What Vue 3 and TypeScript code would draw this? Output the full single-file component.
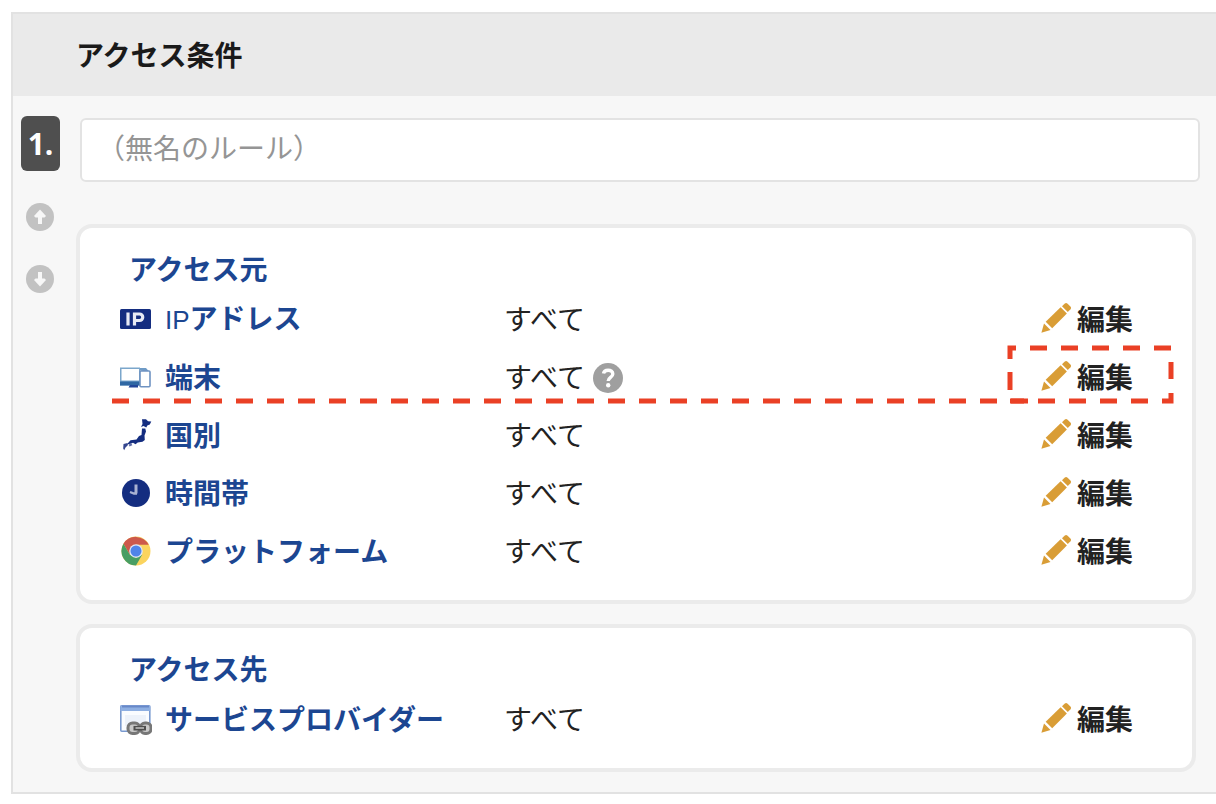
<script setup lang="ts">
import { ref } from 'vue'

interface Condition {
  icon: 'ip' | 'device' | 'japan' | 'clock' | 'chrome' | 'provider'
  latin?: string
  label: string
  value: string
  help?: boolean
  marked?: boolean
}

interface Section {
  id: string
  title: string
  rows: Condition[]
}

const ruleName = ref('')

const sections: Section[] = [
  {
    id: 'source',
    title: 'アクセス元',
    rows: [
      { icon: 'ip', latin: 'IP', label: 'アドレス', value: 'すべて' },
      { icon: 'device', label: '端末', value: 'すべて', help: true, marked: true },
      { icon: 'japan', label: '国別', value: 'すべて' },
      { icon: 'clock', label: '時間帯', value: 'すべて' },
      { icon: 'chrome', label: 'プラットフォーム', value: 'すべて' },
    ],
  },
  {
    id: 'target',
    title: 'アクセス先',
    rows: [{ icon: 'provider', label: 'サービスプロバイダー', value: 'すべて' }],
  },
]
</script>

<template>
  <main class="panel">
    <header class="panel-head">
      <h1>アクセス条件</h1>
    </header>
    <div class="panel-body">
      <div class="side">
        <span class="badge">1.</span>
        <button type="button" class="move" aria-label="上へ移動">
          <svg viewBox="0 0 28 28" width="28" height="28">
            <circle cx="14" cy="14" r="14" fill="#c2c2c2" />
            <path d="M14 21V10" fill="none" stroke="#f7f7f7" stroke-width="4" />
            <path d="M14 6.500l6 6.500-1.500 1.500h-9L8 13z" fill="#f7f7f7" />
          </svg>
        </button>
        <button type="button" class="move" aria-label="下へ移動">
          <svg viewBox="0 0 28 28" width="28" height="28">
            <circle cx="14" cy="14" r="14" fill="#c2c2c2" />
            <path d="M14 7V18" fill="none" stroke="#f7f7f7" stroke-width="4" />
            <path d="M14 21.500l6-6.500-1.500-1.500h-9L8 15z" fill="#f7f7f7" />
          </svg>
        </button>
      </div>
      <div class="content">
        <input v-model="ruleName" class="name" type="text" aria-label="ルール名" placeholder="（無名のルール）" />
        <section v-for="section in sections" :key="section.id" class="card" :aria-labelledby="section.id">
          <h2 :id="section.id">{{ section.title }}</h2>
          <table>
            <tbody>
              <tr v-for="row in section.rows" :key="row.label">
                <th scope="row">
                  <div class="label">
                    <svg v-if="row.icon === 'ip'" class="icon" viewBox="0 0 32 32">
                      <rect x="0" y="6" width="31" height="20" rx="1.500" fill="#142d80" />
                      <path d="M8 9.500v13M14.500 22.500v-13M13 11h6.500a2.800 2.800 0 0 1 0 6.500h-4" fill="none" stroke="#e8ebf5" stroke-width="3.200" />
                    </svg>
                    <svg v-else-if="row.icon === 'device'" class="icon" viewBox="0 0 32 32">
                      <path d="M0 6.500h20v18H0z" fill="#7ba6cb" />
                      <path d="M1.500 8h17.500v11.500H1.500z" fill="#fff" />
                      <path d="M0 20.500h20v4H0z" fill="#2f67a3" />
                      <path d="M10 24h8v2.500H8.500z" fill="#23479a" />
                      <path d="M20 9.500V7h6l3.500 4z" fill="#6f9bc6" />
                      <rect x="20" y="10" width="10" height="15.800" rx="1" fill="#fff" stroke="#6f93c2" stroke-width="1.600" />
                    </svg>
                    <svg v-else-if="row.icon === 'japan'" class="icon" viewBox="0 0 32 32">
                      <path d="M22 .3h4l2 2 3.300.2-1.500 3-2.500 1-1 2-2.800-1.500-2.500 1 1.500-3z" fill="#142d80" />
                      <path d="M22 9.500h3.300l.7 3-1.500 4 .3 4.500-2.300 1.800-4.800.7-2.200 1.800-2.500-1.500-2.500 1-3.500.5 3.500-4 6-.8 2.500-3.500 2.500-1z" fill="#142d80" />
                      <path d="M3.500 25l4-1 .5 2-2.500 2.500-1.300 2.800-1-1.800z" fill="#35468f" />
                      <path d="M8.500 25.500l3-1 .8 1.800-2.800 1.200z" fill="#6470a8" />
                    </svg>
                    <svg v-else-if="row.icon === 'clock'" class="icon" viewBox="0 0 32 32">
                      <circle cx="16" cy="16" r="14" fill="#142d80" />
                      <path d="M16 7.500v9" fill="none" stroke="#a9b2d2" stroke-width="3" />
                      <path d="M17 16.500h-3l-4-1.500" fill="none" stroke="#a9b2d2" stroke-width="2.400" />
                    </svg>
                    <svg v-else-if="row.icon === 'chrome'" class="icon" viewBox="0 0 32 32">
                      <circle cx="16" cy="16" r="14.500" fill="#fbd45e" />
                      <path d="M3.440 8.750A14.500 14.500 0 0 1 28.700 9.800H16L9.720 19.600z" fill="#cd594b" />
                      <path d="M3.440 8.750A14.500 14.500 0 0 0 16 30.500L22.280 19.600 16 23 9.720 19.600z" fill="#489e63" />
                      <circle cx="16" cy="16" r="6.800" fill="#dfe7f5" />
                      <circle cx="16" cy="16" r="5.500" fill="#5084e9" />
                    </svg>
                    <svg v-else class="icon" viewBox="0 0 32 32">
                      <rect x=".8" y="2.800" width="29" height="25.500" rx="1" fill="#fafcff" stroke="#7999cf" stroke-width="1.600" />
                      <path d="M.5 2.500h29.700v5.500H.5z" fill="#8eafe2" />
                      <path d="M2 2.500h27v2H2z" fill="#6888c8" />
                      <path d="M5 12h21v11H5z" fill="#edf2fa" />
                      <g fill="none">
                        <rect x="8" y="20" width="11.500" height="10.500" rx="4.500" fill="#c8c8c8" stroke="#777" stroke-width="3" />
                        <rect x="20.500" y="20" width="10.500" height="10.500" rx="4.500" fill="#c8c8c8" stroke="#777" stroke-width="3" />
                        <path d="M13.500 25.200h12.500" stroke="#4e4e4e" stroke-width="4.600" />
                        <path d="M15.500 25h8.500" stroke="#b0b0b0" stroke-width="1.800" />
                      </g>
                    </svg>
                    <span class="label-text"><span v-if="row.latin" class="latin">{{ row.latin }}</span>{{ row.label }}</span>
                  </div>
                </th>
                <td class="raised">
                  <div class="value">
                    <span>{{ row.value }}</span>
                    <button v-if="row.help" type="button" class="help" aria-label="ヘルプ">
                      <svg viewBox="0 0 30 30" width="30" height="30">
                        <circle cx="15" cy="15" r="15" fill="#9f9f9f" />
                        <path d="M10.500 10.500c.4-2.400 2.200-3.300 4.600-3.300 2.700 0 4.700 1.400 4.700 3.700 0 3.400-4.600 3.500-4.600 7" fill="none" stroke="#fff" stroke-width="3.400" />
                        <circle cx="15.200" cy="22.200" r="2.200" fill="#fff" />
                      </svg>
                    </button>
                  </div>
                </td>
                <td class="raised action">
                  <button type="button" class="edit">
                    <svg viewBox="0 0 30 30" width="30" height="30" fill="#d99d36">
                      <path d="M21 3.200L23.800.5q1.400-1 2.800.2l2.800 2.800q1.200 1.400.1 2.700L26.800 9z" />
                      <path d="M19.600 4.300l6.300 6.300L11.200 25.300 4.700 18.800z" />
                      <path d="M3 20.500l6.500 6.500L.4 29.700z" />
                    </svg>
                    <span>編集</span>
                  </button>
                  <template v-if="row.marked">
                    <svg class="mark-line" aria-hidden="true">
                      <line x1="0" y1="3" x2="100%" y2="3" />
                    </svg>
                    <svg class="mark-box" viewBox="0 0 168 60" aria-hidden="true">
                      <path d="M4 14V3H165V56H4" />
                      <path d="M4 45V27" stroke-dasharray="none" />
                    </svg>
                  </template>
                </td>
              </tr>
            </tbody>
          </table>
        </section>
      </div>
    </div>
  </main>
</template>

<style>
body {
  margin: 0;
  background: #fff;
}
</style>

<style scoped>
.panel {
  box-sizing: border-box;
  margin: 12px 0 10px 11px;
  border: 2px solid #e2e2e2;
  border-right: 0;
  background: #f7f7f7;
  color: #222;
  font-family: "Noto Sans CJK JP", sans-serif;
  font-size: 28px;
  line-height: 42px;
}

.panel-head {
  padding: 20px 63px;
  background: #eaeaea;
}

h1,
h2 {
  margin: 0;
  padding-bottom: 2px;
  font-size: 28px;
  line-height: 40px;
  font-weight: 700;
}

h1 {
  color: #1a1a1a;
}

.panel-body {
  display: flex;
  gap: 16px;
  padding: 20px 16px 20px 8px;
}

.side {
  display: flex;
  flex-direction: column;
  align-items: flex-start;
  width: 39px;
  flex: none;
}

.badge {
  width: 39px;
  height: 55px;
  margin-bottom: 32px;
  border-radius: 6px;
  background: #4f4f4f;
  color: #fff;
  font-family: "Liberation Sans Narrow", "Open Sans", sans-serif;
  font-size: 30px;
  font-weight: 700;
  line-height: 56px;
  text-align: center;
}

button {
  margin: 0;
  padding: 0;
  border: 0;
  background: none;
  color: inherit;
  font: inherit;
  cursor: pointer;
}

svg {
  display: block;
  flex: none;
}

.move {
  margin: 0 0 34px 5px;
}

.content {
  display: flex;
  flex: 1;
  flex-direction: column;
  min-width: 0;
  padding-top: 2px;
}

.name {
  box-sizing: border-box;
  height: 64px;
  margin: 0 0 42px 4px;
  padding: 0 15px 6px;
  border: 2px solid #e3e3e3;
  border-radius: 6px;
  background: #fff;
  color: #222;
  font: inherit;
}

.name::placeholder {
  color: #959595;
  opacity: 1;
}

.card {
  margin-right: 4px;
  padding: 20px 58px 20px 40px;
  border: 4px solid #ebebeb;
  border-radius: 16px;
  background: #fff;
}

.card + .card {
  margin-top: 20px;
}

h2 {
  padding-left: 9px;
  color: #1c4691;
}

table {
  width: 100%;
  border-collapse: collapse;
}

tr {
  position: relative;
}

th,
td {
  box-sizing: border-box;
  height: 58px;
  padding: 0;
  text-align: left;
}

.raised {
  padding-bottom: 2px;
}

th {
  width: 384px;
  color: #1c4691;
  font-weight: 700;
}

.label {
  display: flex;
  align-items: center;
  gap: 13px;
}

.label-text {
  padding-bottom: 2px;
}

.icon {
  width: 32px;
  height: 32px;
}

.latin {
  font-family: "Liberation Sans", sans-serif;
  font-size: 26px;
  font-weight: 400;
}

.value {
  display: flex;
  align-items: center;
  gap: 8px;
}

.help {
  margin-top: 4px;
}

.action {
  width: 93px;
}

.edit {
  display: flex;
  align-items: center;
  gap: 6px;
  font-weight: 700;
  white-space: nowrap;
}

.mark-line,
.mark-box {
  position: absolute;
  overflow: visible;
  fill: none;
  stroke: #ea4025;
  stroke-width: 5px;
  stroke-dasharray: 17 14;
  pointer-events: none;
}

.mark-line {
  left: -8px;
  bottom: 2px;
  width: calc(100% - 98px);
  height: 6px;
}

.mark-box {
  right: -40px;
  bottom: 1px;
  width: 168px;
  height: 60px;
}
</style>
